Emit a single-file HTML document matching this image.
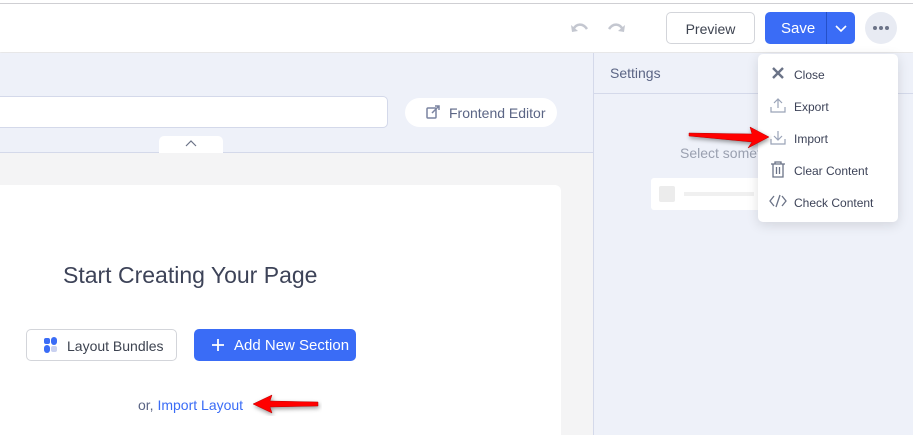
<!DOCTYPE html>
<html><head><meta charset="utf-8"><style>
*{box-sizing:border-box;margin:0;padding:0}
html,body{width:913px;height:435px;overflow:hidden}
body{position:relative;font-family:"Liberation Sans",sans-serif;background:#f4f4f5}
.abs{position:absolute}
</style></head><body>
<div class="abs" style="left:0;top:0;width:913px;height:52px;background:#fff;box-shadow:0 1px 2px rgba(0,0,0,.08)">
  <div class="abs" style="left:0;top:3px;width:913px;height:1px;background:#cfcfd3"></div>
</div>
<svg class="abs" style="left:569px;top:20px" width="22" height="14" viewBox="0 0 22 14"><path d="M4 10 C7 3 14 3 18 9" fill="none" stroke="#c4c7d0" stroke-width="2.5"/><path d="M2 5 L3 12 L9 11 Z" fill="#c4c7d0"/></svg>
<svg class="abs" style="left:605px;top:20px" width="22" height="14" viewBox="0 0 22 14"><path d="M18 10 C15 3 8 3 4 9" fill="none" stroke="#c4c7d0" stroke-width="2.5"/><path d="M20 5 L19 12 L13 11 Z" fill="#c4c7d0"/></svg>
<div class="abs" style="left:666px;top:12px;width:89px;height:32px;border:1px solid #d3d5da;border-radius:5px;background:#fff;color:#3d4350;font-size:14px;text-align:center;line-height:32px">Preview</div>
<div class="abs" style="left:765px;top:12px;width:90px;height:32px;border-radius:5px;background:#3a6cf6;color:#fff;font-size:15px">
  <span class="abs" style="left:16px;top:8px;line-height:17px">Save</span>
  <div class="abs" style="left:61px;top:0;width:1px;height:32px;background:#2550c8"></div>
  <svg class="abs" style="left:69px;top:11px" width="14" height="10" viewBox="0 0 14 10"><path d="M2 3 L7 8 L12 3" fill="none" stroke="#fff" stroke-width="1.6"/></svg>
</div>
<div class="abs" style="left:865px;top:12px;width:32px;height:32px;border-radius:50%;background:#e8ebf3">
  <div class="abs" style="left:8px;top:14px;width:4px;height:4px;border-radius:50%;background:#6b7387"></div>
  <div class="abs" style="left:14px;top:14px;width:4px;height:4px;border-radius:50%;background:#6b7387"></div>
  <div class="abs" style="left:20px;top:14px;width:4px;height:4px;border-radius:50%;background:#6b7387"></div>
</div>
<div class="abs" style="left:0;top:53px;width:593px;height:100px;background:#eef1f9;border-bottom:1px solid #d4d9ea"></div>
<div class="abs" style="left:-10px;top:96px;width:398px;height:32px;background:#fff;border:1px solid #d4d9ea;border-radius:5px"></div>
<div class="abs" style="left:405px;top:98px;width:152px;height:29px;background:#fff;border-radius:15px;color:#5b6585;font-size:14px">
  <svg class="abs" style="left:21px;top:7px" width="14" height="14" viewBox="0 0 14 14"><rect x="1" y="3" width="9" height="10" fill="none" stroke="#7a83a0" stroke-width="1.5" rx="1"/><path d="M6 8 L13 1 M9 1 H13 V5" fill="none" stroke="#7a83a0" stroke-width="1.5"/></svg>
  <span class="abs" style="left:44px;top:7px;line-height:16px">Frontend Editor</span>
</div>
<div class="abs" style="left:159px;top:136px;width:64px;height:17px;background:#fff;border-radius:5px 5px 0 0">
  <svg class="abs" style="left:25px;top:3px" width="14" height="8" viewBox="0 0 14 8"><path d="M2 7 L7 2 L12 7" fill="none" stroke="#6b7387" stroke-width="1.2"/></svg>
</div>
<div class="abs" style="left:-10px;top:185px;width:571px;height:250px;background:#fff;border-radius:6px 6px 0 0"></div>
<div class="abs" style="left:63px;top:262px;font-size:23px;color:#3d4358;white-space:nowrap">Start Creating Your Page</div>
<div class="abs" style="left:26px;top:329px;width:151px;height:32px;border:1px solid #d3d5da;border-radius:5px;background:#fff;font-size:14px;color:#3d4350">
  <div class="abs" style="left:17px;top:8px;width:6px;height:6px;border-radius:2px;background:#3a6cf6"></div>
  <div class="abs" style="left:17px;top:15px;width:6px;height:8px;border-radius:3px;background:#3a6cf6"></div>
  <div class="abs" style="left:24px;top:7px;width:6px;height:8px;border-radius:3px;background:#3a6cf6"></div>
  <div class="abs" style="left:24px;top:16px;width:6px;height:6px;border-radius:2px;background:#c9d1f0"></div>
  <span class="abs" style="left:40px;top:8px;line-height:16px">Layout Bundles</span>
</div>
<div class="abs" style="left:194px;top:329px;width:162px;height:32px;border-radius:5px;background:#3a6cf6;color:#fff;font-size:15px">
  <svg class="abs" style="left:17px;top:9px" width="14" height="14" viewBox="0 0 14 14"><path d="M7 1 V13 M1 7 H13" stroke="#fff" stroke-width="1.8"/></svg>
  <span class="abs" style="left:40px;top:8px;line-height:17px">Add New Section</span>
</div>
<div class="abs" style="left:138px;top:397px;font-size:14px;color:#5b6585;white-space:nowrap">or, <span style="color:#3a6cf6">Import Layout</span></div>
<svg class="abs" style="left:250px;top:392px" width="72" height="24" viewBox="0 0 72 24"><path d="M3 12 L22 3 L20 9 L68 10 L68 14 L20 15 L22 21 Z" fill="#f00" stroke="#b00" stroke-width=".5" style="filter:drop-shadow(1px 2px 2px rgba(0,0,0,.4))"/></svg>
<div class="abs" style="left:593px;top:53px;width:320px;height:382px;background:#eef1f9;border-left:1px solid #d4d9ea"></div>
<div class="abs" style="left:594px;top:93px;width:319px;height:1px;background:#d4d9ea"></div>
<div class="abs" style="left:610px;top:65px;font-size:14px;color:#5b6585">Settings</div>
<div class="abs" style="left:680px;top:145px;font-size:14px;color:#9aa0b0;white-space:nowrap">Select somet</div>
<div class="abs" style="left:651px;top:178px;width:110px;height:32px;background:#fff;border-radius:3px">
  <div class="abs" style="left:8px;top:8px;width:16px;height:16px;background:#ececec;border-radius:2px"></div>
  <div class="abs" style="left:33px;top:14px;width:70px;height:4px;background:#f0f0f0"></div>
</div>
<div class="abs" style="left:758px;top:54px;width:140px;height:168px;background:#fff;border-radius:5px;box-shadow:0 3px 12px rgba(0,0,0,.12);font-size:12px;color:#3d4358">
  <svg class="abs" style="left:14px;top:13px" width="12" height="12" viewBox="0 0 12 12"><path d="M1 1 L11 11 M11 1 L1 11" stroke="#6b7387" stroke-width="2.4"/></svg>
  <span class="abs" style="left:36px;top:14px">Close</span>
  <svg class="abs" style="left:12px;top:43px" width="16" height="16" viewBox="0 0 16 16"><path d="M8 11 V2 M4 6 L8 2 L12 6 M1 10 V15 H15 V10" fill="none" stroke="#9aa3b8" stroke-width="1.2"/></svg>
  <span class="abs" style="left:36px;top:46px">Export</span>
  <svg class="abs" style="left:12px;top:75px" width="16" height="16" viewBox="0 0 16 16"><path d="M8 2 V11 M4 7 L8 11 L12 7 M1 10 V15 H15 V10" fill="none" stroke="#9aa3b8" stroke-width="1.2"/></svg>
  <span class="abs" style="left:36px;top:78px">Import</span>
  <svg class="abs" style="left:12px;top:107px" width="16" height="17" viewBox="0 0 16 17"><path d="M1 3 H15 M5 3 V1 H11 V3 M3 3 V16 H13 V3 M6.5 6 V13 M9.5 6 V13" fill="none" stroke="#6b7387" stroke-width="1.3"/></svg>
  <span class="abs" style="left:36px;top:110px">Clear Content</span>
  <svg class="abs" style="left:11px;top:140px" width="18" height="14" viewBox="0 0 18 14"><path d="M5 2 L1 7 L5 12 M13 2 L17 7 L13 12 M11 1 L7 13" fill="none" stroke="#6b7387" stroke-width="1.3"/></svg>
  <span class="abs" style="left:36px;top:142px">Check Content</span>
</div>
<svg class="abs" style="left:686px;top:124px" width="86" height="26" viewBox="0 0 86 26"><path d="M83 13 L64 3 L66 10 L3 9 L3 12 L66 18 L62 24 Z" fill="#f00" stroke="#b00" stroke-width=".5" style="filter:drop-shadow(1px 2px 2px rgba(0,0,0,.4))"/></svg>
</body></html>
